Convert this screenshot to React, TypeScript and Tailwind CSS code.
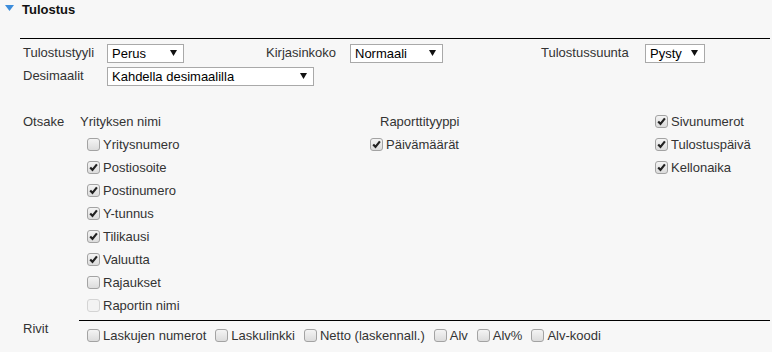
import type { ReactNode } from "react";

function Check({ checked = false, disabled = false }: { checked?: boolean; disabled?: boolean }) {
  return (
    <span
      className={
        "relative inline-block size-[13px] shrink-0 rounded-[3px] border " +
        (disabled
          ? "border-[#d4d4d4] bg-[#f3f3f3]"
          : "border-[#a3a3a3] bg-gradient-to-b from-[#f4f4f4] to-[#dcdcdc]")
      }
    >
      {checked && (
        <svg viewBox="0 0 11 11" className="absolute left-0 top-0 size-[11px]">
          <path d="M2.2 5.4 L4.5 7.9 L8.9 2.4" fill="none" stroke="#222" strokeWidth="2.2" />
        </svg>
      )}
    </span>
  );
}

function Item({ label, checked, disabled }: { label: string; checked?: boolean; disabled?: boolean }) {
  return (
    <span className="flex items-center gap-[3px]">
      <Check checked={checked} disabled={disabled} />
      <span className="leading-[15px]">{label}</span>
    </span>
  );
}

function Select({ value, w }: { value: string; w: string }) {
  return (
    <div className={"flex h-[19px] items-center justify-between border border-[#a9a9a9] bg-white pl-[4px] pr-[6px] text-black " + w}>
      <span className="leading-[15px]">{value}</span>
      <svg viewBox="0 0 7 6" className="h-[6px] w-[7px]">
        <polygon points="0,0 7,0 3.5,6" fill="#111" />
      </svg>
    </div>
  );
}

function Row({ children }: { children?: ReactNode }) {
  return <div className="flex h-[23px] items-center">{children}</div>;
}

const left = [
  { label: "Yritysnumero" },
  { label: "Postiosoite", checked: true },
  { label: "Postinumero", checked: true },
  { label: "Y-tunnus", checked: true },
  { label: "Tilikausi", checked: true },
  { label: "Valuutta", checked: true },
  { label: "Rajaukset" },
  { label: "Raportin nimi", disabled: true },
];

const rivit = ["Laskujen numerot", "Laskulinkki", "Netto (laskennall.)", "Alv", "Alv%", "Alv-koodi"];

export default function App() {
  return (
    <div className="h-[352px] w-[772px] overflow-hidden bg-[#f7f7f7] font-['Liberation_Sans',Arial,sans-serif] text-[13px] text-[#333]">
      {/* section header */}
      <div className="flex h-[20px] items-center pl-[5px]">
        <svg viewBox="0 0 9 6" className="mb-[5px] h-[6px] w-[9px]">
          <polygon points="0,0 9,0 4.5,6" fill="#3d8ddb" />
        </svg>
        <span className="ml-[8px] text-[13px] font-bold text-[#111]">Tulostus</span>
      </div>

      <div className="ml-[20px] mr-[2px] mt-[18px] border-t border-black pt-[3px]">
        <div className="flex h-[22px] items-center">
          <span className="w-[87px] pl-[3px]">Tulostustyyli</span>
          <div className="w-[159px]">
            <Select value="Perus" w="w-[77px]" />
          </div>
          <span className="w-[84px]">Kirjasinkoko</span>
          <div className="w-[191px]">
            <Select value="Normaali" w="w-[93px]" />
          </div>
          <span className="w-[104px]">Tulostussuunta</span>
          <Select value="Pysty" w="w-[60px]" />
        </div>
        <div className="mt-[1px] flex h-[22px] items-center">
          <span className="w-[87px] pl-[3px]">Desimaalit</span>
          <Select value="Kahdella desimaalilla" w="w-[207px]" />
        </div>

        {/* Otsake */}
        <div className="mt-[23px] flex">
          <div className="w-[59px] pl-[3px]">
            <Row>Otsake</Row>
          </div>
          <div className="w-[287px]">
            <Row>
              <span className="pl-[1px]">Yrityksen nimi</span>
            </Row>
            {left.map((it) => (
              <Row key={it.label}>
                <span className="pl-[8px]">
                  <Item {...it} />
                </span>
              </Row>
            ))}
          </div>
          <div className="w-[285px]">
            <Row>
              <span className="pl-[14px]">Raporttityyppi</span>
            </Row>
            <Row>
              <span className="pl-[4px]">
                <Item label="Päivämäärät" checked />
              </span>
            </Row>
          </div>
          <div className="flex-1">
            {["Sivunumerot", "Tulostuspäivä", "Kellonaika"].map((l) => (
              <Row key={l}>
                <span className="pl-[4px]">
                  <Item label={l} checked />
                </span>
              </Row>
            ))}
          </div>
        </div>

        {/* Rivit */}
        <div className="mt-[3px] flex">
          <div className="w-[59px] pl-[3px] pt-[1px] leading-[15px]">Rivit</div>
          <div className="flex flex-1 gap-[9px] border-t border-black pl-[8px] pt-[7px]">
            {rivit.map((l) => (
              <Item key={l} label={l} />
            ))}
          </div>
        </div>
      </div>
    </div>
  );
}
